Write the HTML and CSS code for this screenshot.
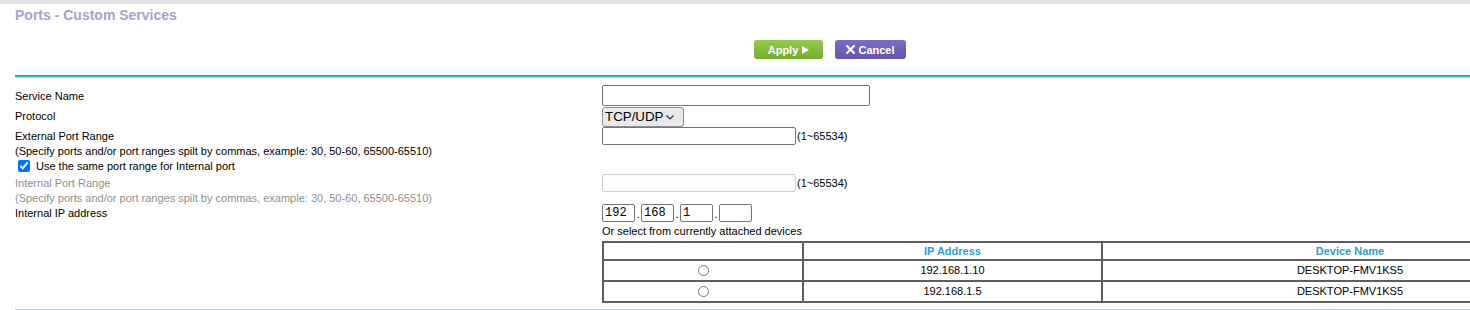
FILE: index.html
```html
<!DOCTYPE html>
<html lang="en">
<head>
  <meta charset="UTF-8" />
  <title>Ports - Custom Services</title>
  <link rel="stylesheet" href="styles.css">
</head>
<body>
  <div class="topbar"></div>
  <h1 class="page-title">Ports - Custom Services</h1>

  <div class="actions">
    <button class="btn btn-apply" type="button">Apply
      <svg class="btn-icon" width="7" height="8" viewBox="0 0 7 8"><polygon points="0,0 7,4 0,8" fill="#fff"/></svg>
    </button>
    <button class="btn btn-cancel" type="button">
      <svg class="btn-icon" width="9" height="9" viewBox="0 0 9 9"><path d="M1 1 L8 8 M8 1 L1 8" stroke="#fff" stroke-width="2.2" stroke-linecap="square"/></svg>
      Cancel
    </button>
  </div>

  <div class="rule"></div>

  <form class="form">
    <div class="row row-name">
      <span class="label">Service Name</span>
      <div class="field"><input class="text-input input-name" type="text"></div>
    </div>

    <div class="row row-protocol">
      <span class="label">Protocol</span>
      <div class="field">
        <div class="select-wrap">
          <select class="select-protocol">
            <option>TCP/UDP</option>
            <option>TCP</option>
            <option>UDP</option>
          </select>
          <svg class="select-arrow" width="8" height="5" viewBox="0 0 8 5"><path d="M0.5 0.5 L4 4 L7.5 0.5" fill="none" stroke="#333" stroke-width="1.2"/></svg>
        </div>
      </div>
    </div>

    <div class="row row-port">
      <span class="label">External Port Range</span>
      <div class="field"><input class="text-input input-port" type="text"><span class="hint">(1~65534)</span></div>
    </div>

    <div class="row row-note">
      <span class="label">(Specify ports and/or port ranges spilt by commas, example: 30, 50-60, 65500-65510)</span>
    </div>

    <div class="row row-check">
      <label class="label check-label"><input class="check" type="checkbox" checked>Use the same port range for Internal port</label>
    </div>

    <div class="row row-port">
      <span class="label label-disabled">Internal Port Range</span>
      <div class="field"><input class="text-input input-port" type="text" disabled><span class="hint">(1~65534)</span></div>
    </div>

    <div class="row row-note">
      <span class="label label-disabled">(Specify ports and/or port ranges spilt by commas, example: 30, 50-60, 65500-65510)</span>
    </div>

    <div class="row row-ip">
      <span class="label">Internal IP address</span>
      <div class="field ip-group">
        <input class="ip-input" type="text" value="192"><span class="ip-dot">.</span>
        <input class="ip-input" type="text" value="168"><span class="ip-dot">.</span>
        <input class="ip-input" type="text" value="1"><span class="ip-dot">.</span>
        <input class="ip-input" type="text" value="">
      </div>
    </div>

    <div class="row row-select">
      <span class="label"></span>
      <div class="field">Or select from currently attached devices</div>
    </div>

    <div class="row row-devices">
      <span class="label"></span>
      <div class="field">
        <table class="devices">
          <thead>
            <tr>
              <th class="col-pick"></th>
              <th class="col-ip">IP Address</th>
              <th class="col-name">Device Name</th>
            </tr>
          </thead>
          <tbody>
            <tr>
              <td><input class="radio" type="radio" name="device"></td>
              <td>192.168.1.10</td>
              <td>DESKTOP-FMV1KS5</td>
            </tr>
            <tr>
              <td><input class="radio" type="radio" name="device"></td>
              <td>192.168.1.5</td>
              <td>DESKTOP-FMV1KS5</td>
            </tr>
          </tbody>
        </table>
      </div>
    </div>
  </form>

  <div class="bottom-rule"></div>
</body>
</html>
```

FILE: styles.css
```css
html, body {
  overflow: hidden;
}

body {
  margin: 0;
  background: #fff;
  color: #000;
  font-family: "Liberation Sans", Arial, sans-serif;
  font-size: 11px;
  line-height: 13px;
}

.topbar {
  height: 4px;
  background: #e3e3e3;
}

.page-title {
  margin: 3px 0 0 15px;
  font-size: 14px;
  line-height: 16px;
  font-weight: bold;
  color: #a8a2d0;
}

.actions {
  display: flex;
  gap: 12px;
  margin: 17px 0 0 754px;
}

.btn {
  display: flex;
  align-items: center;
  justify-content: center;
  gap: 4px;
  height: 19px;
  padding: 0;
  border: none;
  border-radius: 3px;
  color: #fff;
  font-family: "Liberation Sans", Arial, sans-serif;
  font-size: 11px;
  font-weight: bold;
  cursor: pointer;
}

.btn-apply {
  width: 69px;
  background: linear-gradient(to bottom, #94c94b, #74ad2f);
}

.btn-cancel {
  width: 71px;
  gap: 3px;
  background: linear-gradient(to bottom, #7e6cc4, #6754ad);
}

.btn-icon {
  display: block;
}

.rule {
  margin: 16px 0 0 15px;
  height: 2px;
  background: #3d9fd0;
  box-shadow: 0 1px 0 #b7dff0;
}

.form {
  margin: 8px 0 0 15px;
}

.row {
  display: grid;
  grid-template-columns: 587px 1fr;
  align-items: center;
}

.row-name { height: 21px; }
.row-protocol { height: 21px; }
.row-port { height: 18px; }
.row-note { height: 11px; }
.row-check { height: 18px; }
.row-ip { height: 19px; }
.row-select { height: 18px; }
.row-devices { margin-top: 1px; align-items: start; }

.label {
  white-space: nowrap;
}

.row-name .label,
.row-check .label,
.row-ip .label {
  padding-top: 2px;
}

.label-disabled {
  color: #8f8f8f;
}

.check-label {
  display: flex;
  align-items: center;
}

.check {
  width: 12px;
  height: 12px;
  margin: 0 6px 0 3px;
}

.field {
  display: flex;
  align-items: center;
}

.text-input {
  box-sizing: border-box;
  margin: 0;
  padding: 1px 3px;
  border: 1px solid #767676;
  border-radius: 2px;
  background: #fff;
  font-family: "Liberation Sans", Arial, sans-serif;
  font-size: 13px;
}

.text-input:disabled {
  border-color: #cfcfcf;
  background: #fdfdfd;
}

.input-name {
  width: 268px;
  height: 21px;
}

.input-port {
  width: 194px;
  height: 18px;
}

.hint {
  margin-left: 1px;
}

.select-wrap {
  position: relative;
  display: flex;
}

.select-protocol {
  box-sizing: border-box;
  width: 82px;
  height: 20px;
  margin: 0;
  padding: 0 0 0 2px;
  appearance: none;
  -webkit-appearance: none;
  border: 1px solid #8d8d8d;
  border-radius: 3px;
  background: #e9e9ed;
  color: #000;
  font-family: "Liberation Sans", Arial, sans-serif;
  font-size: 13.33px;
}

.select-arrow {
  position: absolute;
  left: 64px;
  top: 8px;
  pointer-events: none;
}

.ip-group {
  gap: 0;
}

.ip-input {
  box-sizing: border-box;
  width: 33px;
  height: 18px;
  margin: 0;
  padding: 0 2px;
  border: 1px solid #767676;
  border-radius: 2px;
  font-family: "Liberation Mono", "DejaVu Sans Mono", monospace;
  font-size: 12px;
}

.ip-dot {
  width: 6px;
  text-align: center;
  padding-top: 4px;
}

.devices {
  table-layout: fixed;
  width: 997px;
  border-collapse: collapse;
  border: 2px solid #5e5e5e;
}

.devices th,
.devices td {
  border: 2px solid #5e5e5e;
  padding: 0;
  text-align: center;
  font-size: 11px;
}

.devices th {
  height: 16px;
  color: #2e9ed0;
  font-weight: bold;
}

.devices td {
  height: 19px;
}

.col-pick { width: 198px; }
.col-ip { width: 297px; }

.radio {
  display: block;
  width: 11px;
  height: 11px;
  margin: 0 auto;
}

.bottom-rule {
  margin: 6px 0 0 15px;
  height: 1px;
  background: #98d5df;
}
```
